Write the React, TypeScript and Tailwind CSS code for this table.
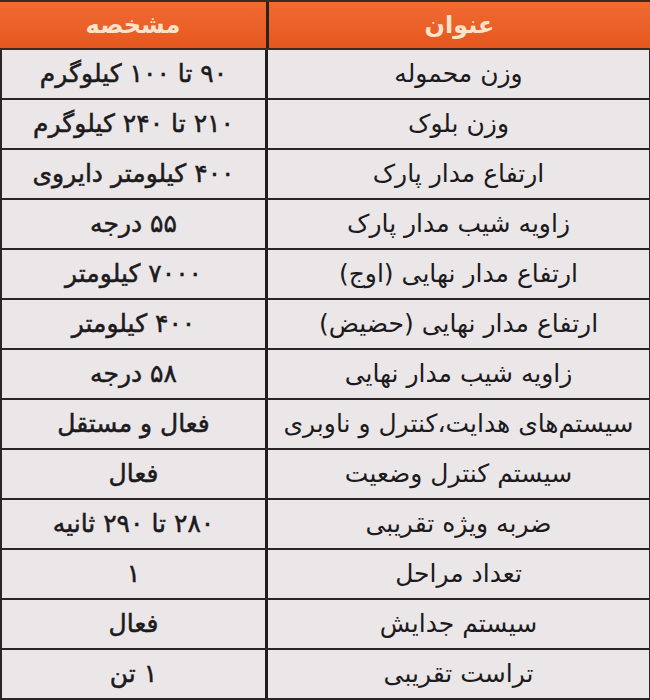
import React from 'react';

const rows: [string, string][] = [
  ['وزن محموله', '۹۰ تا ۱۰۰ کیلوگرم'],
  ['وزن بلوک', '۲۱۰ تا ۲۴۰ کیلوگرم'],
  ['ارتفاع مدار پارک', '۴۰۰ کیلومتر دایروی'],
  ['زاویه شیب مدار پارک', '۵۵ درجه'],
  ['ارتفاع مدار نهایی (اوج)', '۷۰۰۰ کیلومتر'],
  ['ارتفاع مدار نهایی (حضیض)', '۴۰۰ کیلومتر'],
  ['زاویه شیب مدار نهایی', '۵۸ درجه'],
  ['سیستم‌های هدایت،کنترل و ناوبری', 'فعال و مستقل'],
  ['سیستم کنترل وضعیت', 'فعال'],
  ['ضربه ویژه تقریبی', '۲۸۰ تا ۲۹۰ ثانیه'],
  ['تعداد مراحل', '۱'],
  ['سیستم جدایش', 'فعال'],
  ['تراست تقریبی', '۱ تن'],
];

const App = () => {
  return (
    <div
      dir="rtl"
      className="w-[650px] h-[700px] overflow-hidden bg-[#ebe6e8] text-[#1b1a1c] border-t-2 border-[#3a2a24]"
      style={{ fontFamily: '"DejaVu Sans", sans-serif' }}
    >
      <div className="grid grid-cols-[384px_1fr] h-[48px] bg-gradient-to-b from-[#f06a32] to-[#e5581f] border-b-2 border-[#3a2a24]">
        <div className="flex items-center justify-center border-l-[3px] border-[#2a2220] text-[24px] font-bold text-[#fde3cc]">
          عنوان
        </div>
        <div className="flex items-center justify-center text-[24px] font-bold text-[#fde3cc]">
          مشخصه
        </div>
      </div>
      {rows.map(([title, value], i) => (
        <div
          key={i}
          className="grid grid-cols-[384px_1fr] h-[50px] border-b-2 border-[#2a2628] border-r border-l-2"
        >
          <div className="flex items-center justify-center border-l-[3px] border-[#1e1c1d] text-[25px]">
            {title}
          </div>
          <div className="flex items-center justify-center text-[25px] [-webkit-text-stroke:0.5px_#1b1a1c]">
            {value}
          </div>
        </div>
      ))}
    </div>
  );
};

export default App;
